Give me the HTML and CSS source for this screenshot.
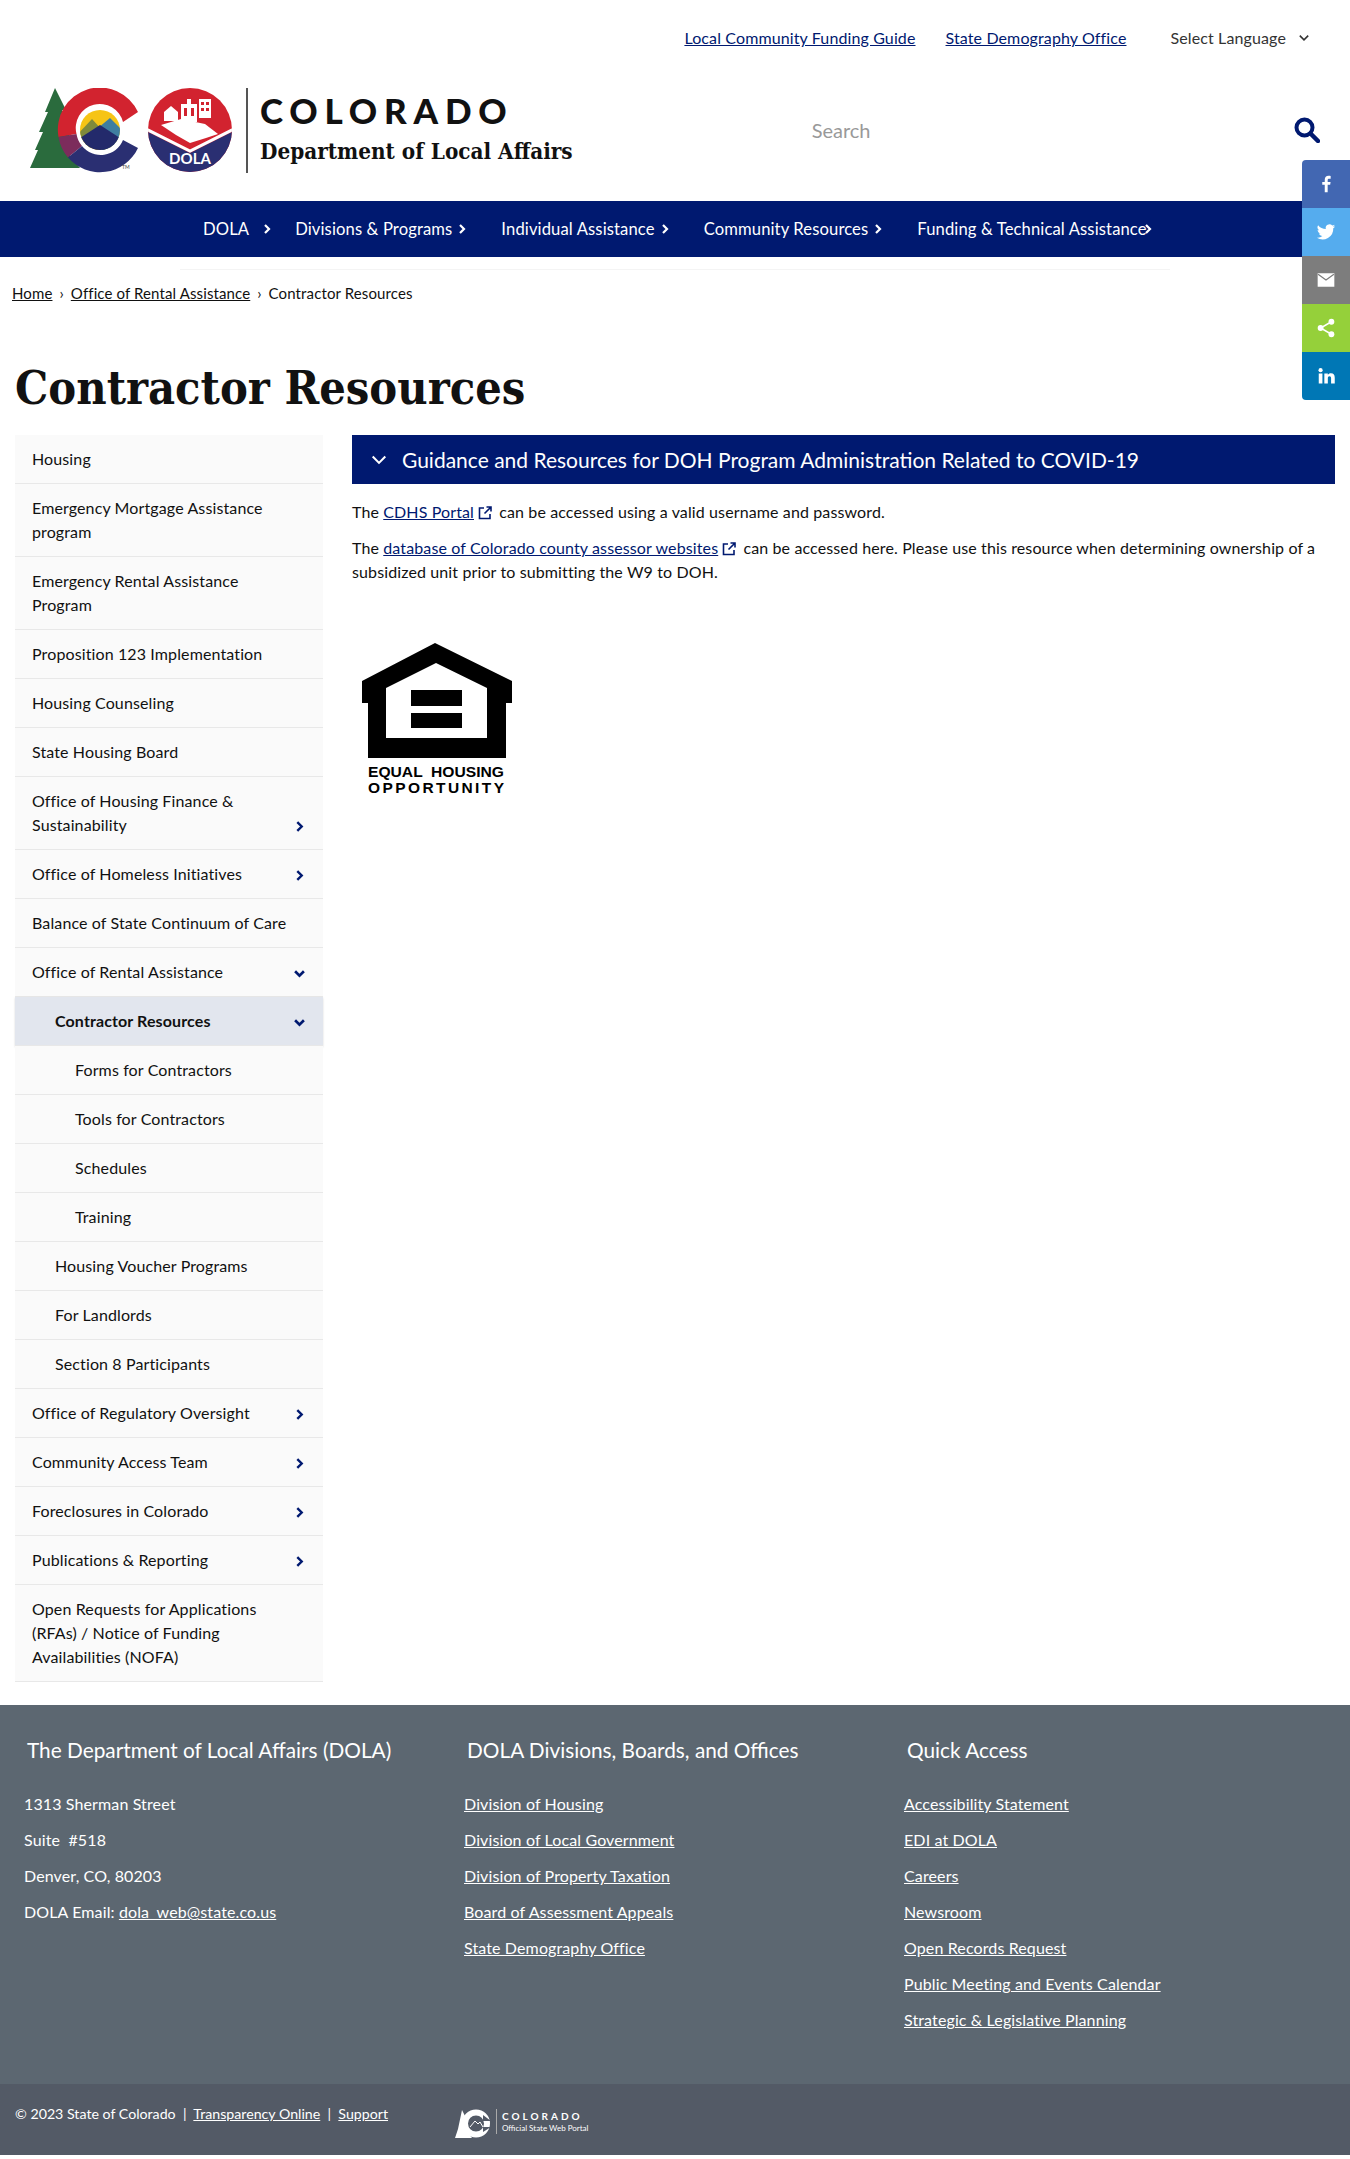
FILE: index.html
```html
<!DOCTYPE html>
<html lang="en">
<head>
    <meta charset="UTF-8">
    <meta name="viewport" content="width=device-width, initial-scale=1.0">
    <title>Contractor Resources | Department of Local Affairs</title>
    <link rel="stylesheet" href="styles.css">
</head>
<body>

    <svg class="icon-defs" width="0" height="0" aria-hidden="true">
        <symbol id="chev-right" viewBox="0 0 10 10"><path d="M3 1l4 4-4 4" fill="none" stroke="currentColor" stroke-width="2.200"/></symbol>
        <symbol id="chev-down" viewBox="0 0 10 10"><path d="M1 3l4 4 4-4" fill="none" stroke="currentColor" stroke-width="2.400"/></symbol>
        <symbol id="ext-link" viewBox="0 0 16 16"><path d="M7 3H2.500v10.500H13V9M9.500 2H14v4.500M14 2L7.500 8.500" fill="none" stroke="currentColor" stroke-width="1.600"/></symbol>
    </svg>

    <div class="top-links">
        <a href="#">Local Community Funding Guide</a>
        <a href="#">State Demography Office</a>
        <span class="lang">Select Language
            <svg class="lang-chev" viewBox="0 0 10 10"><path d="M1.500 3l3.500 3.500L8.500 3" fill="none" stroke="currentColor" stroke-width="1.300"/></svg>
        </span>
    </div>

    <header class="site-header">
        <a class="brand" href="#">
            <svg class="brand-mark" viewBox="0 0 202 85" role="img" aria-label="Colorado and DOLA logos">
                <defs>
                    <clipPath id="disc"><circle cx="70" cy="42" r="20"/></clipPath>
                    <clipPath id="dola-clip"><circle cx="160" cy="42" r="42"/></clipPath>
                </defs>
                <path d="M25 0L36 22H32L42 38L36 62L50 80H0L8 62H5L13 44H9L18 24H15Z" fill="#2a6b3d"/>
                <path d="M108 24A42 42 0 0 0 28.500 49L46.500 46A24 24 0 0 1 93 34Z" fill="#d2232f"/>
                <path d="M28.500 49A42 42 0 0 0 38 69.500L52 58A24 24 0 0 1 46.500 46Z" fill="#7c2c5c"/>
                <path d="M108 60A42 42 0 0 1 38 69.500L52 58A24 24 0 0 0 93 52Z" fill="#2a2f72"/>
                <g clip-path="url(#disc)">
                    <rect x="50" y="22" width="40" height="40" fill="#f6c415"/>
                    <path d="M48 46L62 31L72 42L60 62H48Z" fill="#7f8a3c"/>
                    <path d="M68 40L80 30L94 44V62H72Z" fill="#3f7ea0"/>
                    <path d="M50 50L70 37L90 50V64H50Z" fill="#232a6b"/>
                </g>
                <text x="92" y="81" class="tm">TM</text>
                <circle cx="160" cy="42" r="42" fill="#d2232f"/>
                <g clip-path="url(#dola-clip)">
                    <path d="M116 43L160 65L204 43V90H116Z" fill="#2a2f72"/>
                    <path d="M116 41L160 63L204 41" fill="none" stroke="#fff" stroke-width="3"/>
                </g>
                <path d="M131 37L151 31L175 36L188 46L176 50L160 55L146 47Z" fill="#fff"/>
                <g fill="#fff">
                    <path d="M134 24L141 18L148 24V33H134Z"/>
                    <path d="M151 16H167V34H151ZM157 11H161V16H157Z"/>
                    <path d="M169 11H181V30H169Z"/>
                </g>
                <path d="M171 14h3v3h-3zM176 14h3v3h-3zM171 20h3v3h-3zM176 20h3v3h-3zM154 20h3v8h-3zM161 20h3v8h-3z" fill="#d2232f"/>
                <text x="160" y="76" class="dola-word">DOLA</text>
            </svg>
            <span class="brand-rule"></span>
            <span class="brand-text">
                <span class="brand-state">COLORADO</span>
                <span class="brand-dept">Department of Local Affairs</span>
            </span>
        </a>
        <form class="search">
            <input type="text" placeholder="Search" aria-label="Search">
            <svg class="search-icon" viewBox="0 0 26 26"><circle cx="10.500" cy="10.500" r="8" fill="none" stroke="currentColor" stroke-width="4"/><path d="M16.500 16.500L24 24" stroke="currentColor" stroke-width="4.500" stroke-linecap="round"/></svg>
        </form>
    </header>

    <nav class="main-nav">
        <ul>
            <li class="first">DOLA<svg><use href="#chev-right"/></svg></li>
            <li>Divisions &amp; Programs<svg><use href="#chev-right"/></svg></li>
            <li>Individual Assistance<svg><use href="#chev-right"/></svg></li>
            <li>Community Resources<svg><use href="#chev-right"/></svg></li>
            <li class="last">Funding &amp; Technical Assistance<svg><use href="#chev-right"/></svg></li>
        </ul>
    </nav>
    <div class="nav-shadow"></div>

    <aside class="share">
        <a class="fb" href="#" aria-label="Facebook"><svg viewBox="0 0 24 24"><path d="M14 22v-9h3l.5-3.500H14V7.300c0-1 .4-1.700 1.800-1.700h1.800V2.400C17.200 2.300 16.200 2.200 15 2.200c-2.700 0-4.500 1.600-4.500 4.600v2.700h-3V13h3v9z" fill="#fff"/></svg></a>
        <a class="tw" href="#" aria-label="Twitter"><svg viewBox="0 0 24 24"><path d="M23 5c-.8.400-1.700.600-2.600.700.900-.600 1.600-1.400 2-2.500-.9.500-1.800.900-2.900 1.100A4.500 4.500 0 0 0 11.800 8.500 12.800 12.800 0 0 1 2.500 3.800a4.500 4.500 0 0 0 1.400 6c-.7 0-1.400-.2-2-.6 0 2.200 1.500 4 3.600 4.500-.7.200-1.400.2-2 .1.600 1.800 2.200 3 4.200 3.100A9 9 0 0 1 1 18.800 12.800 12.800 0 0 0 20.700 7.400c.9-.6 1.700-1.400 2.300-2.400z" fill="#fff"/></svg></a>
        <a class="em" href="#" aria-label="Email"><svg viewBox="0 0 24 24"><path d="M2 4h20v16H2z" fill="#fff"/><path d="M2.500 5L12 12l9.500-7" fill="none" stroke="#7d7d7d" stroke-width="1.500"/></svg></a>
        <a class="sh" href="#" aria-label="Share"><svg viewBox="0 0 24 24"><g fill="#fff"><circle cx="18.500" cy="4.500" r="3.500"/><circle cx="5.500" cy="12" r="3.500"/><circle cx="18.500" cy="19.500" r="3.500"/></g><path d="M18.500 4.500L5.500 12l13 7.500" fill="none" stroke="#fff" stroke-width="1.800"/></svg></a>
        <a class="li" href="#" aria-label="LinkedIn"><svg viewBox="0 0 24 24"><g fill="#fff"><circle cx="5.500" cy="5" r="2.500"/><path d="M3.300 9h4.400v12H3.300zM10 9h4.200v1.700c.7-1.200 2-2 3.700-2 3.400 0 4.600 2 4.600 5.300v7h-4.400v-6.300c0-1.500-.5-2.500-1.900-2.500s-2 1.100-2 2.500V21H10z"/></g></svg></a>
    </aside>

    <div class="breadcrumb">
        <a href="#">Home</a><span class="sep">›</span><a href="#">Office of Rental Assistance</a><span class="sep">›</span><span>Contractor Resources</span>
    </div>

    <h1>Contractor Resources</h1>

    <div class="layout">
        <ul class="side-menu">
            <li>Housing</li>
            <li>Emergency Mortgage Assistance program</li>
            <li>Emergency Rental Assistance Program</li>
            <li>Proposition 123 Implementation</li>
            <li>Housing Counseling</li>
            <li>State Housing Board</li>
            <li class="has-kids"><span>Office of Housing Finance &amp; Sustainability</span><svg><use href="#chev-right"/></svg></li>
            <li class="has-kids"><span>Office of Homeless Initiatives</span><svg><use href="#chev-right"/></svg></li>
            <li>Balance of State Continuum of Care</li>
            <li class="has-kids"><span>Office of Rental Assistance</span><svg><use href="#chev-down"/></svg></li>
            <li class="has-kids lvl2 active"><span>Contractor Resources</span><svg><use href="#chev-down"/></svg></li>
            <li class="lvl3">Forms for Contractors</li>
            <li class="lvl3">Tools for Contractors</li>
            <li class="lvl3">Schedules</li>
            <li class="lvl3">Training</li>
            <li class="lvl2">Housing Voucher Programs</li>
            <li class="lvl2">For Landlords</li>
            <li class="lvl2">Section 8 Participants</li>
            <li class="has-kids"><span>Office of Regulatory Oversight</span><svg><use href="#chev-right"/></svg></li>
            <li class="has-kids"><span>Community Access Team</span><svg><use href="#chev-right"/></svg></li>
            <li class="has-kids"><span>Foreclosures in Colorado</span><svg><use href="#chev-right"/></svg></li>
            <li class="has-kids"><span>Publications &amp; Reporting</span><svg><use href="#chev-right"/></svg></li>
            <li>Open Requests for Applications (RFAs) / Notice of Funding Availabilities (NOFA)</li>
        </ul>

        <main class="content">
            <div class="accordion-head">
                <svg viewBox="0 0 14 14"><path d="M1.500 4l5.500 5.500L12.500 4" fill="none" stroke="currentColor" stroke-width="1.800"/></svg>
                Guidance and Resources for DOH Program Administration Related to COVID-19
            </div>
            <p>The <a href="#">CDHS Portal</a><svg class="ext"><use href="#ext-link"/></svg> can be accessed using a valid username and password.</p>
            <p>The <a href="#">database of Colorado county assessor websites</a><svg class="ext"><use href="#ext-link"/></svg> can be accessed here. Please use this resource when determining ownership of a subsidized unit prior to submitting the W9 to DOH.</p>
            <svg class="eho" viewBox="0 0 150 158" role="img" aria-label="Equal Housing Opportunity">
                <path fill-rule="evenodd" d="M73 0L150 38V60H144V115H6V60H0V38ZM74 20L24 45V95H125V45Z" fill="#000"/>
                <path d="M49 47H100V63H49ZM49 70H100V85H49Z" fill="#000"/>
                <text x="6" y="134" textLength="136" lengthAdjust="spacingAndGlyphs" class="eho-text">EQUAL  HOUSING</text>
                <text x="6" y="150" textLength="136" class="eho-text">OPPORTUNITY</text>
            </svg>
        </main>
    </div>

    <footer>
        <div class="footer-cols">
            <div class="footer-col">
                <h3>The Department of Local Affairs (DOLA)</h3>
                <p>1313 Sherman Street</p>
                <p>Suite&nbsp; #518</p>
                <p>Denver, CO, 80203</p>
                <p>DOLA Email: <a href="#">dola_web@state.co.us</a></p>
            </div>
            <div class="footer-col">
                <h3>DOLA Divisions, Boards, and Offices</h3>
                <p><a href="#">Division of Housing</a></p>
                <p><a href="#">Division of Local Government</a></p>
                <p><a href="#">Division of Property Taxation</a></p>
                <p><a href="#">Board of Assessment Appeals</a></p>
                <p><a href="#">State Demography Office</a></p>
            </div>
            <div class="footer-col">
                <h3>Quick Access</h3>
                <p><a href="#">Accessibility Statement</a></p>
                <p><a href="#">EDI at DOLA</a></p>
                <p><a href="#">Careers</a></p>
                <p><a href="#">Newsroom</a></p>
                <p><a href="#">Open Records Request</a></p>
                <p><a href="#">Public Meeting and Events Calendar</a></p>
                <p><a href="#">Strategic &amp; Legislative Planning</a></p>
            </div>
        </div>
        <div class="footer-bottom">
            <div class="legal">© 2023 State of Colorado &nbsp;|&nbsp; <a href="#">Transparency Online</a> &nbsp;|&nbsp; <a href="#">Support</a></div>
            <div class="portal">
                <svg viewBox="0 0 36 30" class="portal-mark"><path d="M7 1L11 9L13 24L17 29H0L3 20Z" fill="#fff"/><circle cx="21" cy="14.500" r="11" fill="none" stroke="#fff" stroke-width="6"/><path d="M28 6L36 12H28ZM28 23L36 18H28Z" fill="#535a66"/><path d="M15 18l5-6 3 3 2-2 3 5" fill="none" stroke="#fff"/></svg>
                <span class="portal-text"><b>COLORADO</b><small>Official State Web Portal</small></span>
            </div>
        </div>
    </footer>

</body>
</html>
```

FILE: styles.css
```css
body {
    margin: 0;
    font-family: "Lato", sans-serif;
    font-size: 16px;
    letter-spacing: 0.120px;
    line-height: 24px;
    color: #111;
    background: #fff;
}
a {
    color: inherit;
}
.icon-defs {
    position: absolute;
}

/* top strip */
.top-links {
    display: flex;
    justify-content: flex-end;
    align-items: center;
    gap: 30px;
    height: 76px;
    padding-right: 40px;
    color: #001970;
}
.lang {
    display: flex;
    align-items: center;
    margin-left: 14px;
    color: #333;
}
.lang-chev {
    width: 12px;
    height: 12px;
    margin-left: 12px;
}

/* logo + search */
.site-header {
    display: flex;
    align-items: center;
    height: 125px;
    padding: 0 30px 16px;
    box-sizing: border-box;
}
.brand {
    display: flex;
    align-items: center;
    text-decoration: none;
    color: #111;
}
.brand-mark {
    width: 202px;
    height: 85px;
}
.tm {
    font-size: 5px;
    fill: #444;
}
.dola-word {
    font-size: 15px;
    font-weight: bold;
    fill: #fff;
    text-anchor: middle;
}
.brand-rule {
    width: 2px;
    height: 85px;
    margin: 0 12px 0 14px;
    background: #555;
}
.brand-text {
    display: flex;
    flex-direction: column;
}
.brand-state {
    font-weight: 900;
    font-size: 35px;
    line-height: 40px;
    letter-spacing: 6.800px;
}
.brand-dept {
    font-family: "DejaVu Serif", serif;
    font-stretch: condensed;
    font-weight: bold;
    font-size: 22.300px;
    letter-spacing: 0;
    line-height: 42px;
}
.search {
    display: flex;
    align-items: center;
    flex: 1;
    margin: 0 0 2px 239px;
}
.search input {
    flex: 1;
    border: none;
    outline: none;
    padding: 0;
    font: inherit;
    font-size: 20px;
}
.search input::placeholder {
    color: #999;
}
.search-icon {
    width: 26px;
    height: 26px;
    color: #001970;
}

/* main nav */
.main-nav {
    height: 56px;
    background: #001970;
    color: #fff;
}
.main-nav ul {
    display: flex;
    align-items: center;
    height: 56px;
    margin: 0;
    padding: 0 0 0 203px;
    list-style: none;
    font-size: 16.600px;
}
.main-nav li {
    display: flex;
    align-items: center;
    margin-right: 34px;
    white-space: nowrap;
}
.main-nav svg {
    width: 10px;
    height: 10px;
    margin-left: 5px;
}
.main-nav li.first {
    margin-right: 23px;
}
.main-nav li.first svg {
    margin-left: 13px;
}
.main-nav li.last svg {
    margin-left: -4px;
}
.nav-shadow {
    height: 13px;
    margin: 0 180px;
    border-bottom: 1px solid #f4f4f4;
    box-sizing: border-box;
}

/* share buttons, stuck on the right edge */
.share {
    position: fixed;
    top: 160px;
    right: 0;
    width: 48px;
    border-radius: 4px 0 0 4px;
    overflow: hidden;
}
.share a {
    display: flex;
    justify-content: center;
    align-items: center;
    height: 48px;
}
.share svg {
    width: 20px;
    height: 20px;
}
.fb { background: #4267b2; }
.tw { background: #55acee; }
.em { background: #7d7d7d; }
.sh { background: #95d03a; }
.li { background: #0077b5; }

/* breadcrumb */
.breadcrumb {
    padding: 11px 12px 0;
    font-size: 15px;
    line-height: 24px;
}
.sep {
    margin: 0 7px;
}

h1 {
    margin: 0;
    padding: 55px 15px 19px;
    font-family: "DejaVu Serif", serif;
    font-stretch: condensed;
    font-weight: bold;
    font-size: 46.500px;
    letter-spacing: 0;
    line-height: 56px;
}

/* page body */
.layout {
    display: flex;
    gap: 29px;
    padding: 0 15px 23px;
    align-items: flex-start;
}
.side-menu {
    flex: 0 0 308px;
    margin: 0;
    padding: 0;
    list-style: none;
}
.side-menu li {
    display: flex;
    justify-content: space-between;
    align-items: flex-end;
    padding: 12px 32px 12px 17px;
    background: #fafafa;
    border-bottom: 1px solid #e8e8e8;
}
.side-menu li.has-kids {
    padding-right: 18px;
}
.side-menu li span {
    max-width: 240px;
}
.side-menu svg {
    flex: none;
    width: 11px;
    height: 11px;
    margin-bottom: 5px;
    color: #001970;
}
.side-menu .lvl2 {
    padding-left: 40px;
}
.side-menu .lvl3 {
    padding-left: 60px;
}
.side-menu .active {
    background: #e2e6ee;
    font-weight: bold;
    box-shadow: 0 1px 2px rgba(0, 0, 0, 0.150);
}

.content {
    flex: 1;
}
.accordion-head {
    display: flex;
    align-items: center;
    height: 49px;
    padding-left: 19px;
    margin-bottom: 16px;
    background: #001970;
    color: #fff;
    font-size: 21px;
    letter-spacing: 0;
}
.accordion-head svg {
    width: 16px;
    height: 16px;
    margin-right: 15px;
}
.content p {
    margin: 0 0 12px;
}
.content p a {
    color: #001970;
}
.ext {
    width: 16px;
    height: 16px;
    margin: 0 2px 0 3px;
    vertical-align: -3px;
    color: #001970;
}
.eho {
    display: block;
    width: 150px;
    height: 158px;
    margin: 59px 0 0 10px;
}
.eho-text {
    font-family: "Liberation Sans", sans-serif;
    font-weight: bold;
    font-size: 15.500px;
    letter-spacing: 0;
    white-space: pre;
}

/* footer */
footer {
    margin-bottom: 3px;
    color: #fff;
}
.footer-cols {
    display: grid;
    grid-template-columns: 440px 440px 470px;
    height: 379px;
    box-sizing: border-box;
    padding-top: 32px;
    background: #5c6771;
}
.footer-col {
    padding-left: 24px;
}
.footer-col h3 {
    margin: 0 0 29px 3px;
    font-weight: normal;
    font-size: 20.800px;
    letter-spacing: 0;
    line-height: 26px;
}
.footer-col p {
    margin: 0 0 12px;
}
.footer-bottom {
    display: flex;
    height: 71px;
    box-sizing: border-box;
    padding: 18px 0 0 15px;
    background: #535a66;
}
.legal {
    width: 440px;
    font-size: 14.200px;
    letter-spacing: 0;
    line-height: 24px;
}
.portal {
    display: flex;
    align-items: flex-start;
    padding-top: 7px;
}
.portal-mark {
    width: 36px;
    height: 30px;
}
.portal-text {
    display: flex;
    flex-direction: column;
    margin-left: 5px;
    padding-left: 5px;
    border-left: 1px solid #aaa;
}
.portal-text b {
    font-size: 10px;
    line-height: 14px;
    letter-spacing: 3px;
}
.portal-text small {
    font-size: 8px;
    letter-spacing: 0;
    line-height: 11px;
}
```
